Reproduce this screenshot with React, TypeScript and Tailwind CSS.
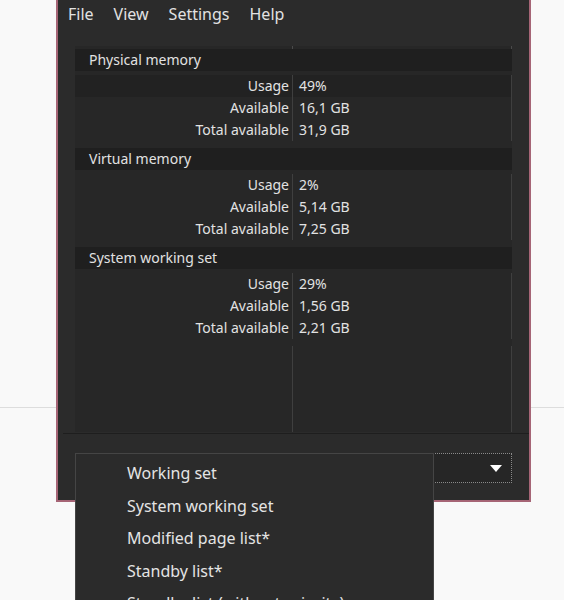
import { FC } from 'react';

type MemoryGroup = {
  title: string;
  rows: { label: string; value: string }[];
};

const groups: MemoryGroup[] = [
  {
    title: 'Physical memory',
    rows: [
      { label: 'Usage', value: '49%' },
      { label: 'Available', value: '16,1 GB' },
      { label: 'Total available', value: '31,9 GB' },
    ],
  },
  {
    title: 'Virtual memory',
    rows: [
      { label: 'Usage', value: '2%' },
      { label: 'Available', value: '5,14 GB' },
      { label: 'Total available', value: '7,25 GB' },
    ],
  },
  {
    title: 'System working set',
    rows: [
      { label: 'Usage', value: '29%' },
      { label: 'Available', value: '1,56 GB' },
      { label: 'Total available', value: '2,21 GB' },
    ],
  },
];

const menuItems = ['File', 'View', 'Settings', 'Help'];

const listOptions = [
  'Working set',
  'System working set',
  'Modified page list*',
  'Standby list*',
  'Standby list (without priority)',
];

const Group: FC<{ group: MemoryGroup; hovered?: boolean }> = ({ group, hovered }) => (
  <div className="flex flex-col">
    <div className="flex h-[22px] items-center bg-[#1f1f1f] pl-[14px] text-[14px] leading-none">
      {group.title}
    </div>
    <div className="flex flex-col pt-[4px] pb-[7px]">
      {group.rows.map((row, i) => (
        <div
          key={row.label}
          className={`flex h-[22px] items-center text-[14px] leading-none ${
            hovered && i === 0 ? 'bg-[#222222]' : ''
          }`}
        >
          <span className="w-[217px] pr-[3px] text-right">{row.label}</span>
          <span className="flex h-full flex-1 items-center border-x border-[#3f3f3f] pl-[6px]">
            {row.value}
          </span>
        </div>
      ))}
    </div>
  </div>
);

export default function App() {
  return (
    <div
      className="relative h-[600px] w-[564px] overflow-hidden bg-[#f9f9f9]"
      style={{ fontFamily: '"Noto Sans", "Open Sans", sans-serif' }}
    >
      {/* page rule running behind the window */}
      <div className="absolute left-0 right-0 top-[407px] h-px bg-[#dddddd]" />

      <div className="relative ml-[56px] flex h-[502px] w-[475px] flex-col border-2 border-t-0 border-[#a66576] bg-[#2b2b2b] text-[#e2e2e2]">
        <nav className="flex h-[27px] items-center gap-[20px] pl-[10px] text-[16px] leading-none">
          {menuItems.map((item) => (
            <span key={item}>{item}</span>
          ))}
        </nav>

        <div className="mx-[17px] mt-[19px] flex h-[386px] flex-col bg-[#272727]">
          {/* collapsed column header */}
          <div className="flex h-[3px]">
            <span className="w-[217px]" />
            <span className="flex-1 border-x border-[#4a4a4a]" />
          </div>
          {groups.map((group, i) => (
            <Group key={group.title} group={group} hovered={i === 0} />
          ))}
          <div className="flex flex-1">
            <span className="w-[217px]" />
            <span className="flex-1 border-x border-[#3f3f3f]" />
          </div>
        </div>

        <div className="ml-[5px] mt-[1px] h-px bg-[#1e1e1e]" />

        <div className="mx-[17px] mt-[19px] flex h-[30px] items-center justify-end border border-dotted border-[#8a8a8a] bg-[#262626] pr-[9px]">
          <svg width="12" height="7" viewBox="0 0 12 7">
            <path d="M0 0 H12 L6 7 Z" fill="#ffffff" />
          </svg>
        </div>
      </div>

      {/* open drop-down list */}
      <div className="absolute left-[75px] top-[453px] w-[359px] border border-[#454545] bg-[#2b2b2b] pt-[3px] text-[16px] leading-none text-[#e4e4e4]">
        {listOptions.map((option) => (
          <div key={option} className="flex h-[32.5px] items-center pl-[51px]">
            {option}
          </div>
        ))}
      </div>
    </div>
  );
}
